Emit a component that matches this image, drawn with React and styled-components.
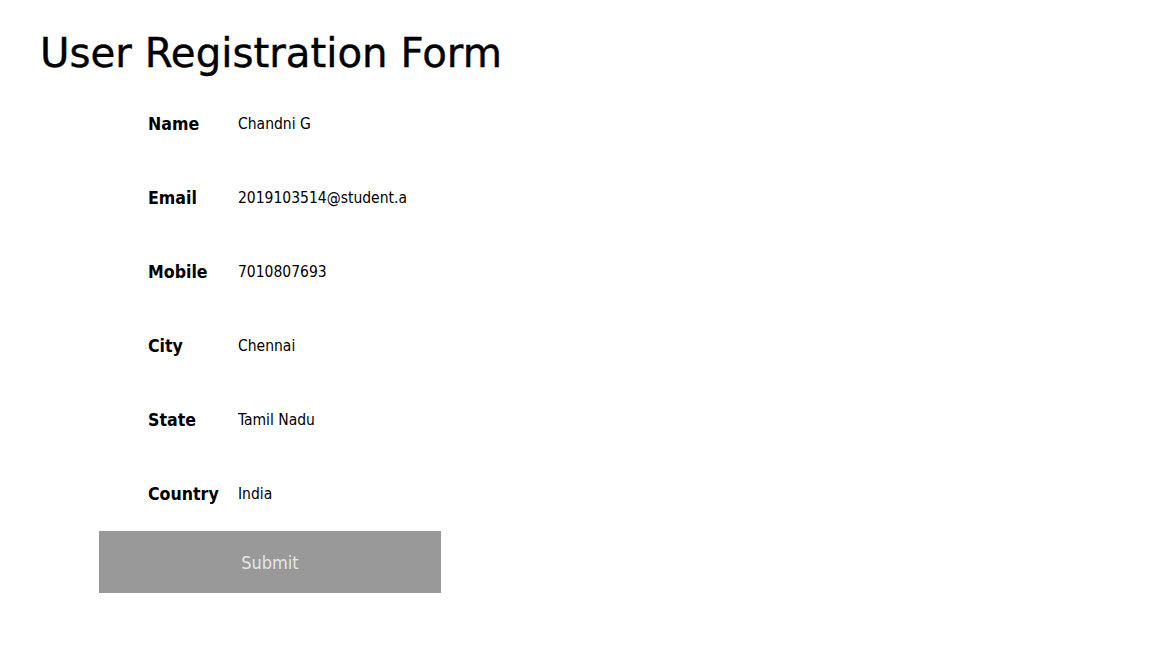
import React, { useEffect, useRef } from 'react'
import styled, { createGlobalStyle } from 'styled-components'

const fields = [
  { label: 'Name', value: 'Chandni G' },
  { label: 'Email', value: '2019103514@student.annauniv.edu' },
  { label: 'Mobile', value: '7010807693' },
  { label: 'City', value: 'Chennai' },
  { label: 'State', value: 'Tamil Nadu' },
  { label: 'Country', value: 'India' },
]

export default function App() {
  const lastRef = useRef(null)

  useEffect(() => {
    const el = lastRef.current
    if (el) {
      el.focus()
      el.setSelectionRange(el.value.length, el.value.length)
    }
  }, [])

  return (
    <Page>
      <GlobalStyle />
      <Headline>User Registration Form</Headline>
      <Form onSubmit={(e) => e.preventDefault()}>
        <Fields>
          {fields.map((f, i) => (
            <Row key={f.label}>
              <Label>{f.label}</Label>
              <Input
                defaultValue={f.value}
                ref={i === fields.length - 1 ? lastRef : null}
              />
            </Row>
          ))}
        </Fields>
        <Button type="submit">Submit</Button>
      </Form>
    </Page>
  )
}

const GlobalStyle = createGlobalStyle`
  body {
    margin: 0;
    background: #fff;
    font-family: "DejaVu Sans", sans-serif;
  }
`

const Page = styled.div`
  padding: 30px 0 0 40px;
`

const Headline = styled.h1`
  margin: 0;
  font-family: "DejaVu Sans", sans-serif;
  font-size: 40.3px;
  font-weight: 400;
  color: #000;
  line-height: 48px;
  -webkit-text-stroke: 0.4px #000;
`

const Form = styled.form`
  margin: 34px 0 0 59px;
  width: 342px;
`

const Fields = styled.div`
  display: flex;
  flex-direction: column;
  gap: 50px;
  padding-left: 49px;
`

const Row = styled.div`
  display: grid;
  grid-template-columns: 90px 168px;
  align-items: center;
  height: 24px;
`

const Label = styled.label`
  font-family: "DejaVu Sans Condensed", "DejaVu Sans", sans-serif;
  font-weight: 700;
  font-size: 17.6px;
  color: #000;
`

const Input = styled.input`
  border: none;
  outline: none;
  padding: 0;
  width: 168px;
  font-family: "DejaVu Sans Condensed", "DejaVu Sans", sans-serif;
  font-size: 15.5px;
  color: #000;
  background: transparent;
  caret-color: #000;
`

const Button = styled.button`
  display: block;
  margin-top: 25px;
  width: 342px;
  height: 62px;
  border: none;
  background: #999999;
  color: #e6e6e6;
  font-family: "DejaVu Sans Condensed", "DejaVu Sans", sans-serif;
  font-size: 18px;
  cursor: pointer;
`
